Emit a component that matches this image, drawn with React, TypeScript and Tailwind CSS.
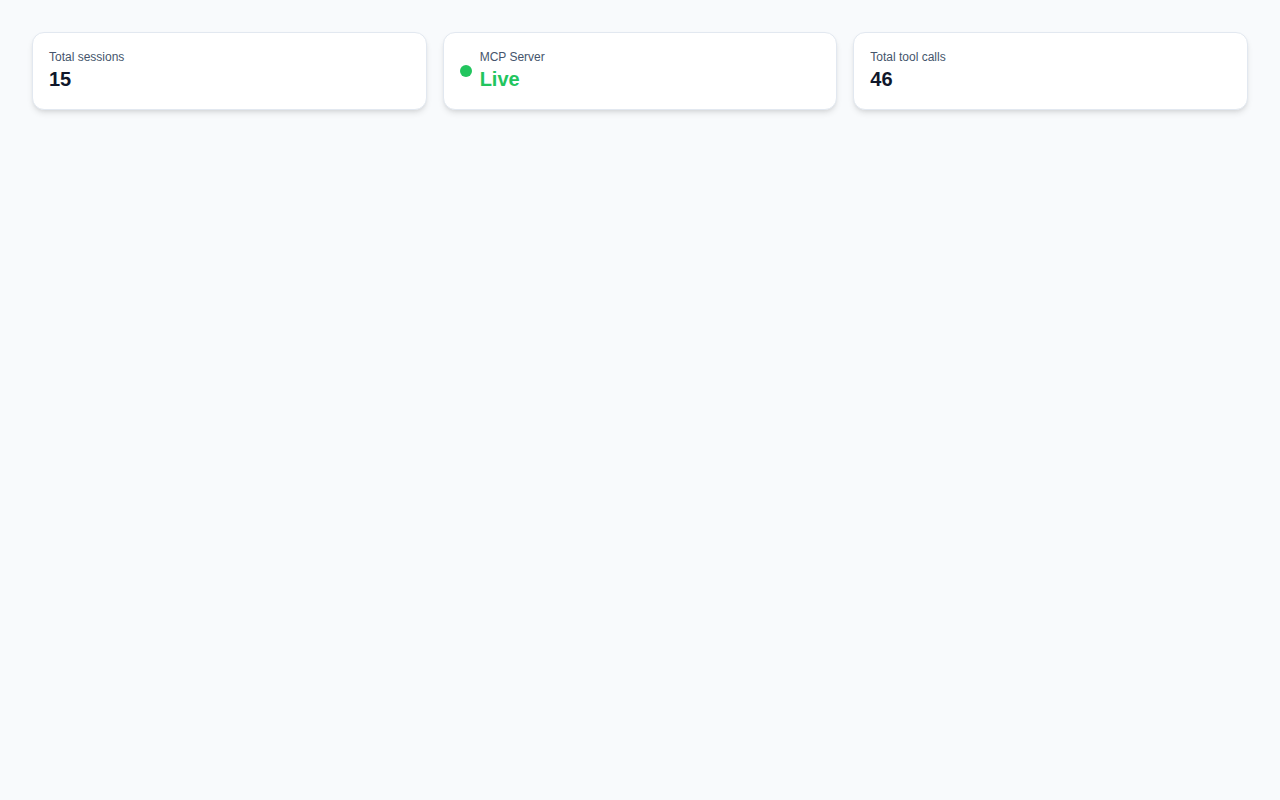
import React from 'react';

function StatCard({ label, children }: { label: string; children: React.ReactNode }) {
  return (
    <div className="bg-white rounded-xl border border-slate-200 shadow-md px-4 py-4">
      <div className="text-xs text-slate-600 leading-4">{label}</div>
      {children}
    </div>
  );
}

export default function App() {
  return (
    <div className="min-h-screen bg-[#f8fafc] p-8" style={{ fontFamily: '"Liberation Sans", Arial, sans-serif' }}>
      <div className="grid grid-cols-3 gap-4">
        <StatCard label="Total sessions">
          <div className="text-xl font-bold text-slate-900 leading-7">15</div>
        </StatCard>

        <div className="bg-white rounded-xl border border-slate-200 shadow-md px-4 py-4 flex items-center gap-2">
          <span className="h-3 w-3 rounded-full bg-[#22c55e] shrink-0" />
          <div>
            <div className="text-xs text-slate-600 leading-4">MCP Server</div>
            <div className="text-xl font-bold text-[#22c55e] leading-7">Live</div>
          </div>
        </div>

        <StatCard label="Total tool calls">
          <div className="text-xl font-bold text-slate-900 leading-7">46</div>
        </StatCard>
      </div>
    </div>
  );
}
